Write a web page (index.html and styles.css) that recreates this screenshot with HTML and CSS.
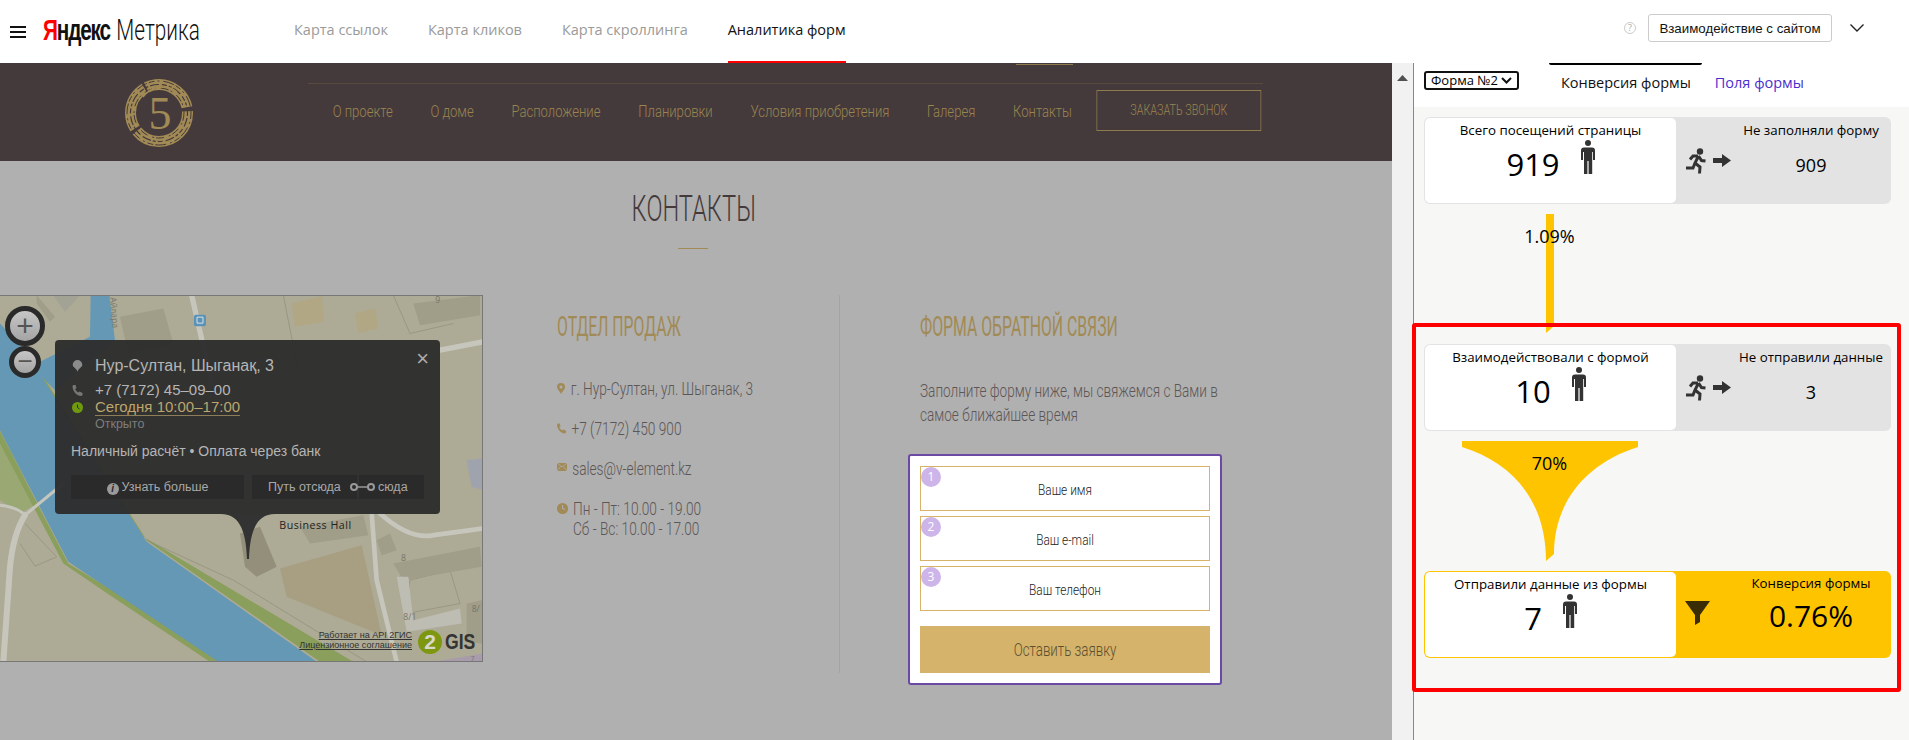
FILE: index.html
```html
<!DOCTYPE html>
<html lang="ru">
<head>
    <meta charset="UTF-8">
    <title>Яндекс Метрика - Аналитика форм</title>
    <link rel="stylesheet" href="styles.css">
</head>
<body>
<header class="topbar">
    <div class="burger"><span></span><span></span><span></span></div>
    <div class="brand"><span class="brand-ya"><i>Я</i>ндекс</span><span class="brand-metrika">Метрика</span></div>
    <nav class="tabs">
        <a href="#">Карта ссылок</a>
        <a href="#">Карта кликов</a>
        <a href="#">Карта скроллинга</a>
        <a href="#" class="active">Аналитика форм</a>
    </nav>
    <div class="topbar-right">
        <span class="help">?</span>
        <button class="mode-btn">Взаимодействие с сайтом</button>
        <svg class="chevron" width="14" height="8" viewBox="0 0 14 8"><path d="M.5.5 7 7 13.500.5" fill="none" stroke="#222" stroke-width="1.400"/></svg>
    </div>
</header>

<div class="workspace">
    <main class="site">
        <section class="banner">
            <div class="banner-logo">
                <svg width="74" height="72" viewBox="0 0 74 72">
                    <circle cx="36" cy="36" r="28.500" fill="none" stroke="#a18a55" stroke-width="11" stroke-dasharray="70 3 46 2 52 4"/>
                    <g fill="none" stroke="#453a3b">
                        <circle cx="36" cy="36" r="32" stroke-dasharray="6 3 2 4 11 2"/>
                        <circle cx="36" cy="36" r="28.500" stroke-width="1.200" stroke-dasharray="3 2 9 3 5 2"/>
                        <circle cx="36" cy="36" r="25" stroke-dasharray="8 2 2 5"/>
                    </g>
                    <path d="M20 20A24 24 0 0 1 54 15" fill="none" stroke="#a18a55" stroke-width="1.500"/>
                    <text x="37" y="52" text-anchor="middle" class="logo-five">5</text>
                </svg>
            </div>
            <div class="banner-main">
                <span class="banner-mark"></span>
                <nav class="site-nav">
                    <a href="#">О проекте</a>
                    <a href="#">О доме</a>
                    <a href="#">Расположение</a>
                    <a href="#">Планировки</a>
                    <a href="#">Условия приобретения</a>
                    <a href="#">Галерея</a>
                    <a href="#">Контакты</a>
                    <a href="#" class="call-btn">ЗАКАЗАТЬ ЗВОНОК</a>
                </nav>
            </div>
        </section>

        <section class="contacts">
            <h1 class="page-title">КОНТАКТЫ</h1>
            <div class="title-rule"></div>
            <div class="contacts-row">
                <div class="map">
                    <svg class="map-bg" width="483" height="367" viewBox="0 45 1449 1100">
                        <rect x="0" y="45" width="1449" height="1100" fill="#adaa95"/>
                        <!-- green bank -->
                        <path d="M0 440 L110 670 L60 700 L0 660Z" fill="#9aa873"/>
                        <path d="M0 105 L130 290 L440 780 L960 1145 L1060 1145 L430 770 L165 400 L110 250 Z" fill="#8a9f5c"/>
                        <path d="M0 455 L205 850 L345 935 L660 1145 L630 1145 L330 945 L190 850 L0 490Z" fill="#8a9f5c"/>
                        <!-- river -->
                        <path d="M272 45 L328 45 L345 180 L165 330 L125 290 L440 785 L950 1145 L655 1145 L340 935 L205 845 L0 450 L0 130 L110 250 L270 170Z" fill="#6498b5"/>
                        <!-- roads -->
                        <g fill="none" stroke="#c6c6bd" stroke-linecap="round">
                            <path d="M575 45 L640 330" stroke-width="16"/>
                            <path d="M1320 210 L1449 185" stroke-width="16"/>
                            <path d="M0 675 Q50 680 75 705 L190 610" stroke-width="9"/>
                            <path d="M75 705 Q40 760 30 860 L10 1145" stroke-width="18"/>
                            <path d="M1115 700 L1130 900 L1190 1145" stroke-width="14"/>
                            <path d="M1140 700 Q1230 780 1300 765 L1449 745" stroke-width="14"/>
                        </g>
                        <g fill="none" stroke="#8f8d78" stroke-width="2">
                            <path d="M440 780 L700 900 L1100 1145"/>
                            <path d="M75 730 L170 830 L105 858 L60 790"/>
                            <path d="M850 45 L900 300"/>
                            <path d="M1180 45 L1230 160 L1360 130"/>
                            <path d="M1230 900 L1220 1000 L1380 970 L1350 870Z"/>
                        </g>
                        <!-- buildings -->
                        <g fill="#a09d88">
                            <path d="M360 110 L490 85 L520 190 L385 220Z"/>
                            <path d="M110 45 L165 110 L150 125 L110 70Z"/>
                            <path d="M160 45 L240 45 L195 95Z" fill="#a2a295"/>
                            <path d="M1240 70 L1440 45 L1440 105 L1260 135Z"/>
                            <path d="M1180 850 L1440 800 L1445 860 L1210 900Z"/>
                            <path d="M1190 890 L1225 890 L1240 1020 L1380 985 L1385 1030 L1220 1055Z" fill="#bdbdb3"/>
                            <path d="M720 760 L780 740 L830 860 L770 890 L735 860Z" fill="#938f7a"/>
                            <path d="M1400 970 L1449 960 L1449 1090 L1400 1085Z"/>
                            <path d="M1130 780 L1170 760 L1190 810 L1145 825Z"/>
                            <path d="M900 740 L1090 705 L1105 765 L930 790Z"/>
                        </g>
                        <path d="M875 70 L965 48 L972 125 L885 140Z" fill="#b2a784"/>
                        <path d="M1065 100 L1125 85 L1135 145 L1075 158Z" fill="#b2a784"/>
                        <path d="M840 865 L1085 795 L1145 1065 L860 950Z" fill="#a89f83"/>
                        <rect x="582" y="104" width="36" height="34" rx="5" fill="#5b93b8"/>
                        <path d="M591 111h18v18h-18z" fill="none" stroke="#d8e0e0" stroke-width="3"/>
                        <path d="M1400 540 L1449 535 L1449 630 L1415 620Z" fill="#9ea3ad"/>
                        <path d="M1300 1145 L1449 1120 L1449 1145Z" fill="#a89bab"/>
                        <g class="map-label">
                            <text transform="translate(330 52) rotate(85)">Айлара</text>
                            <text x="1306" y="68">9</text>
                            <text x="1203" y="843">8</text>
                            <text x="1210" y="1020">8/1</text>
                            <text x="1415" y="995">8/</text>
                            <text x="1412" y="1143" class="map-small">7</text>
                            <text x="838" y="746" class="map-place">Business Hall</text>
                        </g>
                    </svg>

                    <div class="zoom-btn zoom-in">+</div>
                    <div class="zoom-btn zoom-out">−</div>

                    <div class="popup">
                        <span class="popup-close">×</span>
                        <div class="popup-row popup-title">
                            <svg width="10" height="12" viewBox="0 0 10 12"><path d="M5 0a4.800 4.800 0 0 1 4.800 4.800C9.800 7.500 6 8 5 12 4 8 .2 7.500.2 4.800A4.800 4.800 0 0 1 5 0z" fill="#8b8b8b"/></svg>
                            <span>Нур-Султан, Шыганақ, 3</span>
                        </div>
                        <div class="popup-row popup-phone">
                            <svg width="10" height="11" viewBox="0 0 10 11"><path d="M1 0h2l1 3-1.300 1c.5 1.500 1.500 2.700 3 3.500L7 6.500l3 1.500v2l-1 1C4 11 0 6 0 1z" fill="#777"/></svg>
                            <span>+7 (7172) 45–09–00</span>
                        </div>
                        <div class="popup-row popup-hours">
                            <svg width="11" height="11" viewBox="0 0 11 11"><circle cx="5.500" cy="5.500" r="5.500" fill="#6f9a0e"/><path d="M5.500 2.500v3l2 1.500" fill="none" stroke="#2c2c2c"/></svg>
                            <span class="hours-link">Сегодня 10:00–17:00</span>
                        </div>
                        <div class="popup-open">Открыто</div>
                        <div class="popup-pay">Наличный расчёт • Оплата через банк</div>
                        <div class="popup-actions">
                            <div class="popup-btn popup-more"><span class="info-dot">i</span>Узнать больше</div>
                            <div class="popup-btn popup-from">Путь отсюда<svg width="26" height="10" viewBox="0 0 26 10"><circle cx="4" cy="5" r="3" fill="none" stroke="#999" stroke-width="2"/><circle cx="21" cy="5" r="3" fill="none" stroke="#999" stroke-width="2"/><path d="M7 5h11" stroke="#999" stroke-width="1.500"/></svg></div>
                            <div class="popup-btn popup-to">сюда</div>
                        </div>
                        <svg class="popup-tail" width="54" height="45" viewBox="0 0 54 45"><path d="M0 0C17 0 25 14 26 45h2C29 14 37 0 54 0Z" fill="#333"/></svg>
                    </div>

                    <div class="map-credits">
                        <a href="#">Работает на API 2ГИС</a>
                        <a href="#">Лицензионное соглашение</a>
                    </div>
                    <div class="gis-logo"><span class="gis-two">2</span><span class="gis-word">GIS</span></div>
                </div>

                <div class="sales">
                    <h2>ОТДЕЛ ПРОДАЖ</h2>
                    <ul class="sales-list">
                        <li><svg width="8" height="11" viewBox="0 0 8 11"><path d="M4 0a4 4 0 0 1 4 4c0 2.500-3 4.500-4 7C3 8.500 0 6.500 0 4a4 4 0 0 1 4-4zm0 2.500a1.500 1.500 0 1 0 0 3 1.500 1.500 0 0 0 0-3z" fill="#a18a55"/></svg>г. Нур-Султан, ул. Шыганак, 3</li>
                        <li><svg width="9" height="11" viewBox="0 0 10 11"><path d="M1 0h2l1 3-1.300 1c.5 1.500 1.500 2.700 3 3.500L7 6.500l3 1.500v2l-1 1C4 11 0 6 0 1z" fill="#a18a55"/></svg>+7 (7172) 450 900</li>
                        <li><svg width="10" height="8" viewBox="0 0 10 8"><path d="M0 0h10v8H0z" fill="#a18a55"/><path d="M0 0l5 4 5-4M0 8l3.500-4.500M10 8 6.500 3.500" fill="none" stroke="#b0b0b0" stroke-width=".8"/></svg>sales@v-element.kz</li>
                        <li><svg width="11" height="11" viewBox="0 0 11 11"><circle cx="5.500" cy="5.500" r="5.500" fill="#a18a55"/><path d="M5.500 2v3.500l2.500 1" fill="none" stroke="#b0b0b0"/></svg><span>Пн - Пт: 10.00 - 19.00<br>Сб - Вс: 10.00 - 17.00</span></li>
                    </ul>
                </div>

                <div class="feedback">
                    <h2>ФОРМА ОБРАТНОЙ СВЯЗИ</h2>
                    <p>Заполните форму ниже, мы свяжемся с Вами в<br>самое ближайшее время</p>
                    <form class="feedback-form">
                        <div class="field"><b>1</b><span>Ваше имя</span></div>
                        <div class="field"><b>2</b><span>Ваш e-mail</span></div>
                        <div class="field"><b>3</b><span>Ваш телефон</span></div>
                        <div class="submit"><span>Оставить заявку</span></div>
                    </form>
                </div>
            </div>
        </section>
    </main>

    <div class="scrollbar"><svg width="11" height="6" viewBox="0 0 11 6"><path d="M5.500 0 11 6H0z" fill="#505050"/></svg></div>

    <aside class="panel">
        <div class="panel-head">
            <div class="form-select">Форма №2<svg width="11" height="7" viewBox="0 0 11 7"><path d="M1 1l4.500 4.500L10 1" fill="none" stroke="#111" stroke-width="2"/></svg></div>
            <a href="#" class="panel-tab current">Конверсия формы</a>
            <a href="#" class="panel-tab link">Поля формы</a>
        </div>

        <div class="panel-body">
            <div class="card">
                <div class="card-main">
                    <div class="card-title">Всего посещений страницы</div>
                    <div class="card-count">919
                        <svg class="person" width="14" height="34" viewBox="0 0 14 34"><circle cx="7" cy="3" r="3"/><path d="M3 7.500h8a3 3 0 0 1 3 3V20h-2v-8h-.8v22H7.600V21H6.400v13H3V12H2v8H0v-9.500a3 3 0 0 1 3-3z"/></svg>
                    </div>
                </div>
                <div class="card-side">
                    <div class="side-icons">
                        <svg width="20" height="26" viewBox="0 0 20 26"><circle cx="14" cy="3.500" r="3.200" fill="#333"/><path d="M12.500 8 9 15l5 4-.5 6.500M9 15l-2 5H0M12 8H7l-3 3.500M12.500 8l3 4.500 4 .5" fill="none" stroke="#333" stroke-width="3"/></svg>
                        <svg width="18" height="13" viewBox="0 0 18 13"><path d="M0 4h9V0l9 6.500-9 6.500V9H0z" fill="#333"/></svg>
                    </div>
                    <div class="side-text">
                        <div class="card-title">Не заполняли форму</div>
                        <div class="side-count">909</div>
                    </div>
                </div>
            </div>

            <div class="flow flow-thin">
                <svg width="8" height="119" viewBox="0 0 8 119"><path d="M0 0h8v112l-8 7z" fill="#ffc400"/></svg>
                <span class="flow-label">1.09%</span>
            </div>

            <div class="highlight">
                <div class="card">
                    <div class="card-main">
                        <div class="card-title">Взаимодействовали с формой</div>
                        <div class="card-count">10
                            <svg class="person" width="14" height="34" viewBox="0 0 14 34"><circle cx="7" cy="3" r="3"/><path d="M3 7.500h8a3 3 0 0 1 3 3V20h-2v-8h-.8v22H7.600V21H6.400v13H3V12H2v8H0v-9.500a3 3 0 0 1 3-3z"/></svg>
                        </div>
                    </div>
                    <div class="card-side">
                        <div class="side-icons">
                            <svg width="20" height="26" viewBox="0 0 20 26"><circle cx="14" cy="3.500" r="3.200" fill="#333"/><path d="M12.500 8 9 15l5 4-.5 6.500M9 15l-2 5H0M12 8H7l-3 3.500M12.500 8l3 4.500 4 .5" fill="none" stroke="#333" stroke-width="3"/></svg>
                            <svg width="18" height="13" viewBox="0 0 18 13"><path d="M0 4h9V0l9 6.500-9 6.500V9H0z" fill="#333"/></svg>
                        </div>
                        <div class="side-text">
                            <div class="card-title">Не отправили данные</div>
                            <div class="side-count">3</div>
                        </div>
                    </div>
                </div>

                <div class="flow flow-wide">
                    <svg width="176" height="120" viewBox="0 0 176 120"><path d="M0 0h176v6C125 22 92 60 92 113l-8 7C84 60 51 22 0 6z" fill="#ffc400"/></svg>
                    <span class="flow-label">70%</span>
                </div>

                <div class="card card-goal">
                    <div class="card-main">
                        <div class="card-title">Отправили данные из формы</div>
                        <div class="card-count">7
                            <svg class="person" width="14" height="34" viewBox="0 0 14 34"><circle cx="7" cy="3" r="3"/><path d="M3 7.500h8a3 3 0 0 1 3 3V20h-2v-8h-.8v22H7.600V21H6.400v13H3V12H2v8H0v-9.500a3 3 0 0 1 3-3z"/></svg>
                        </div>
                    </div>
                    <div class="card-side">
                        <div class="side-icons">
                            <svg width="25" height="24" viewBox="0 0 25 24"><path d="M0 0h25L15 14v7l-5 3V14z" fill="#3a2c05"/></svg>
                        </div>
                        <div class="side-text">
                            <div class="card-title">Конверсия формы</div>
                            <div class="goal-value">0.76%</div>
                        </div>
                    </div>
                </div>
            </div>
        </div>
    </aside>
</div>
</body>
</html>
```

FILE: styles.css
```css
* {
    margin: 0;
    padding: 0;
    box-sizing: border-box;
}

html, body {
    height: 740px;
    overflow: hidden;
}

body {
    background: #fff;
    font-family: 'Open Sans', 'Noto Sans', sans-serif;
    color: #000;
}

a {
    text-decoration: none;
    color: inherit;
}

/* top bar */
.topbar {
    height: 63px;
    display: flex;
    align-items: center;
    background: #fff;
    padding-left: 10px;
}

.burger {
    width: 16px;
    display: flex;
    flex-direction: column;
    gap: 3px;
    margin-top: 1px;
}

.burger span {
    height: 2px;
    background: #111;
}

.brand {
    margin-left: 17px;
    width: 155px;
    display: flex;
    align-items: baseline;
    font-family: 'Liberation Sans', sans-serif;
    font-size: 29px;
    line-height: 32px;
    margin-top: -3px;
    color: #111;
    white-space: nowrap;
    transform: scaleX(.715);
    transform-origin: left;
}

.brand-ya {
    font-weight: 700;
    letter-spacing: -1.6px;
}

.brand-ya i {
    font-style: normal;
    color: #f00;
}

.brand-metrika {
    margin-left: 9px;
    font-family: Roboto, sans-serif;
    font-weight: 300;
}

.tabs {
    display: flex;
    gap: 40px;
    margin-left: 96px;
    height: 63px;
    font-size: 14.500px;
    color: #9a9a9a;
}

.tabs a {
    line-height: 60px;
    border-bottom: 2px solid transparent;
}

.tabs a.active {
    color: #111;
    border-bottom-color: #f00;
}

.topbar-right {
    margin-left: auto;
    display: flex;
    align-items: center;
    padding-right: 45px;
    margin-top: -7px;
}

.help {
    width: 12px;
    height: 12px;
    border: 1px solid #ccc;
    border-radius: 50%;
    font-size: 9px;
    line-height: 10px;
    text-align: center;
    color: #aaa;
    margin-right: 12px;
}

.mode-btn {
    width: 184px;
    height: 28px;
    background: #fff;
    border: 1px solid #ccc;
    border-radius: 3px;
    font-family: 'Liberation Sans', sans-serif;
    font-size: 13.300px;
    color: #111;
}

.chevron {
    margin-left: 18px;
}

/* main area */
.workspace {
    height: 677px;
    display: flex;
}

.site {
    width: 1392px;
    flex: none;
    background: #b0b0b0;
}

.banner {
    height: 98px;
    display: flex;
    background: #453a3b;
}

.banner-logo {
    width: 308px;
    padding: 14px 0 0 123px;
}

.logo-five {
    font-family: 'Liberation Serif', serif;
    font-size: 46px;
    fill: #a18a55;
}

.banner-main {
    width: 955px;
    height: 21px;
    border-bottom: 1px solid #5a4b3e;
    position: relative;
}

.banner-mark {
    position: absolute;
    left: 708px;
    top: 1px;
    width: 57px;
    height: 1px;
    background: #8f7a4c;
}

/* the site's own font is very narrow, so its text is squeezed along x */
.site-nav {
    display: flex;
    align-items: center;
    width: 1240px;
    height: 41px;
    margin-top: 27px;
    padding-left: 32px;
    gap: 49px;
    font-family: Roboto, sans-serif;
    font-weight: 300;
    font-size: 17px;
    color: #9a8450;
    white-space: nowrap;
    transform: scaleX(.77);
    transform-origin: left;
}

.call-btn {
    flex: none;
    width: 214px;
    height: 41px;
    line-height: 39px;
    text-align: center;
    font-size: 14px;
    border: 1px solid #8f7a4c;
    margin-left: -17px;
}

.contacts {
    padding-top: 26px;
}

.page-title {
    height: 36px;
    padding-right: 7px;
    text-align: center;
    font-family: Roboto, sans-serif;
    font-weight: 300;
    font-size: 37px;
    line-height: 43px;
    color: #453a3b;
    transform: scaleX(.64);
}

.title-rule {
    width: 30px;
    height: 1px;
    margin: 25px 0 0 678px;
    background: #a18a55;
}

.contacts-row {
    display: flex;
    margin-top: 46px;
}

/* map */
.map {
    width: 483px;
    height: 367px;
    flex: none;
    position: relative;
    border: 1px solid #777;
    border-left: 0;
    font-family: 'Liberation Sans', sans-serif;
    overflow: hidden;
}

.map-bg {
    display: block;
    margin-top: -1px;
}

.map-label text {
    font-family: 'Open Sans', sans-serif;
    font-size: 26px;
    fill: #77766a;
}

.map-label .map-small {
    font-size: 20px;
}

.map-label .map-place {
    font-size: 32px;
    letter-spacing: 1.500px;
    fill: #222;
}

.zoom-btn {
    position: absolute;
    border-radius: 50%;
    border: 5px solid #2a2a2a;
    background: linear-gradient(#c6c6c6, #a4a4a4);
    color: #555;
    text-align: center;
    font-family: 'Liberation Sans', sans-serif;
}

.zoom-in {
    left: 5px;
    top: 10px;
    width: 40px;
    height: 40px;
    font-size: 30px;
    line-height: 29px;
}

.zoom-out {
    left: 9px;
    top: 50px;
    width: 32px;
    height: 32px;
    font-size: 26px;
    line-height: 21px;
}

.popup {
    position: absolute;
    left: 55px;
    top: 44px;
    width: 385px;
    height: 174px;
    padding: 16px;
    background: rgba(45, 45, 45, .96);
    border-radius: 4px;
    color: #b5b5b5;
}

.popup-close {
    position: absolute;
    right: 11px;
    top: 7px;
    font-size: 22px;
    line-height: 24px;
    color: #aaa;
}

.popup-row {
    display: flex;
    align-items: center;
}

.popup-row svg {
    width: 24px;
    flex: none;
    padding-right: 11px;
}

.popup-title {
    font-size: 16px;
    line-height: 20px;
}

.popup-phone {
    font-size: 15px;
    line-height: 18px;
    margin-top: 5px;
}

.popup-hours {
    font-size: 15px;
    line-height: 16px;
}

.hours-link {
    color: #bda56c;
    border-bottom: 1px solid #8d7d58;
}

.popup-open {
    margin: 0 0 0 24px;
    font-size: 12.500px;
    line-height: 16px;
    color: #7d7d7d;
}

.popup-pay {
    margin-top: 10px;
    font-size: 14px;
    line-height: 18px;
}

.popup-actions {
    display: flex;
    margin-top: 15px;
    height: 24px;
    font-size: 12.500px;
    line-height: 24px;
}

.popup-btn {
    background: #2a2a2a;
    text-align: center;
    color: #a8a8a8;
}

.popup-more {
    width: 173px;
    margin-right: 8px;
}

.info-dot {
    display: inline-block;
    width: 12px;
    height: 12px;
    margin-right: 3px;
    border-radius: 50%;
    background: #9a9a9a;
    color: #2a2a2a;
    font-size: 10px;
    font-style: italic;
    font-weight: 700;
    line-height: 12px;
    vertical-align: -1px;
}

.popup-from {
    width: 105px;
    margin-right: 2px;
    padding-left: 16px;
    position: relative;
    z-index: 1;
    text-align: left;
    white-space: nowrap;
}

.popup-from svg {
    margin-left: 9px;
    vertical-align: -1px;
}

.popup-to {
    width: 65px;
    padding-left: 19px;
    text-align: left;
}

.popup-tail {
    position: absolute;
    left: 166px;
    top: 100%;
}

.map-credits {
    position: absolute;
    right: 70px;
    bottom: 11px;
    display: flex;
    flex-direction: column;
    align-items: flex-end;
    font-size: 9px;
    line-height: 10px;
    color: #333;
}

.map-credits a {
    text-decoration: underline;
}

.gis-logo {
    position: absolute;
    left: 418px;
    bottom: 7px;
    display: flex;
    align-items: center;
}

.gis-two {
    width: 24px;
    height: 24px;
    border-radius: 50%;
    background: #7e9710;
    color: #d8d8d0;
    font-size: 21px;
    font-weight: 700;
    line-height: 24px;
    text-align: center;
}

.gis-word {
    margin-left: 3px;
    font-size: 22px;
    font-weight: 700;
    line-height: 16px;
    color: #333;
    transform: scaleX(.8);
    transform-origin: left;
}

/* contact columns */
.sales,
.feedback {
    font-family: Roboto, sans-serif;
    font-weight: 300;
    padding-top: 18px;
    color: #5d5656;
}

.sales {
    flex: none;
    width: 283px;
    margin-left: 74px;
    height: 378px;
    border-right: 1px solid #a5a59b;
}

.feedback {
    margin-left: 80px;
    width: 320px;
}

.sales h2,
.feedback h2 {
    font-size: 27px;
    font-weight: 400;
    line-height: 28px;
    color: #a18a55;
    white-space: nowrap;
    transform: scaleX(.585);
    transform-origin: left;
}

.sales-list {
    list-style: none;
    margin-top: 38px;
    display: flex;
    flex-direction: column;
    gap: 20px;
    font-size: 18px;
    line-height: 20px;
    white-space: nowrap;
    transform: scaleX(.76);
    transform-origin: left;
}

.sales-list li {
    display: flex;
    align-items: flex-start;
}

.sales-list svg {
    flex: none;
    margin: 4px 10px 0 0;
    transform: scaleX(1.32);
    transform-origin: left;
}

.feedback p {
    margin-top: 38px;
    font-size: 18px;
    line-height: 24px;
    white-space: nowrap;
    transform: scaleX(.755);
    transform-origin: left;
}

.feedback-form {
    width: 314px;
    height: 231px;
    margin: 27px 0 0 -12px;
    padding: 10px;
    background: #fff;
    border: 2px solid #6a4aa5;
    border-radius: 3px;
    display: flex;
    flex-direction: column;
    gap: 5px;
    color: #222;
    font-size: 15px;
}

.field {
    height: 45px;
    position: relative;
    border: 1px solid #d6b368;
    text-align: center;
    line-height: 47px;
}

.field span {
    display: block;
    transform: scaleX(.79);
}

.submit span {
    display: block;
    transform: scaleX(.74);
}

.field b {
    position: absolute;
    left: 0;
    top: 0;
    width: 20px;
    height: 20px;
    border-radius: 50%;
    background: #cdb5ea;
    color: #fff;
    font-family: 'Open Sans', sans-serif;
    font-size: 12px;
    font-weight: 400;
    line-height: 20px;
}

.submit {
    height: 47px;
    margin-top: 10px;
    background: #d5b36a;
    font-size: 18px;
    line-height: 47px;
    text-align: center;
    color: #5c5030;
}

.scrollbar {
    width: 22px;
    flex: none;
    padding: 12px 0 0 5px;
    background: #f1f1f1;
    border-right: 1px solid #888;
}

.scrollbar svg {
    display: block;
}

/* right panel */
.panel {
    width: 495px;
    flex: none;
    display: flex;
    flex-direction: column;
    background: #f7f7f5;
}

.panel-head {
    height: 44px;
    position: relative;
    display: flex;
    align-items: flex-start;
    background: #fff;
    font-size: 14.500px;
}

.form-select {
    width: 95px;
    height: 19px;
    margin: 8px 0 0 10px;
    padding: 0 5px;
    border: 2px solid #111;
    border-radius: 3px;
    display: flex;
    align-items: center;
    justify-content: space-between;
    font-size: 13px;
    line-height: 15px;
    white-space: nowrap;
}

.panel-tab {
    line-height: 20px;
    margin-top: 10px;
}

.panel-tab.current {
    margin-left: 42px;
    position: relative;
    color: #111;
}

.panel-tab.current::before {
    content: '';
    position: absolute;
    left: -12px;
    right: -11px;
    top: -10px;
    height: 2px;
    border-radius: 0 0 3px 3px;
    background: #000;
}

.panel-tab.link {
    margin-left: 24px;
    color: #4a2fd0;
}

.panel-body {
    padding: 10px 18px 0 10px;
}

.card {
    height: 87px;
    display: flex;
    background: #e3e3e3;
    border-radius: 6px;
}

.card-main {
    width: 251px;
    height: 85px;
    margin: 1px 0 0 1px;
    padding-top: 2px;
    text-align: center;
    background: #fff;
    border-radius: 5px;
}

.card-title {
    font-size: 13.300px;
    line-height: 20px;
    white-space: nowrap;
}

.card-count {
    display: flex;
    justify-content: center;
    gap: 21px;
    font-size: 31px;
    line-height: 44px;
    height: 44px;
    margin-top: 2px;
}

.card-count .person {
    margin-top: -2px;
    fill: #333;
}

.card-side {
    flex: 1;
    display: flex;
}

.side-icons {
    width: 55px;
    padding: 31px 0 0 10px;
    display: flex;
    align-items: flex-start;
    gap: 7px;
}

.side-icons svg + svg {
    margin-top: 6px;
}

.side-text {
    width: 160px;
    padding-top: 3px;
    text-align: center;
}

.side-count {
    margin-top: 13px;
    font-size: 18px;
    line-height: 24px;
}

.goal-value {
    font-size: 30px;
    line-height: 44px;
    margin-top: 1px;
}

.card-goal {
    background: #ffc400;
}

.card-goal .side-icons {
    padding: 30px 0 0 9px;
}

.card-goal .side-text {
    padding-top: 2px;
}

.flow {
    position: relative;
    width: 251px;
    display: flex;
    justify-content: center;
}

.flow svg {
    display: block;
}

.flow-label {
    position: absolute;
    left: 0;
    right: 0;
    top: 10px;
    text-align: center;
    font-size: 18px;
    line-height: 24px;
}

.flow-thin {
    margin-top: 10px;
    margin-bottom: -10px;
}

.flow-wide {
    margin: 10px 0;
}

.highlight {
    position: relative;
    width: 489px;
    height: 369px;
    margin: 0 0 0 -12px;
    padding: 17px 0 0 8px;
    border: 4px solid #f00;
    border-radius: 3px;
}

.highlight .card {
    width: 467px;
}
```
